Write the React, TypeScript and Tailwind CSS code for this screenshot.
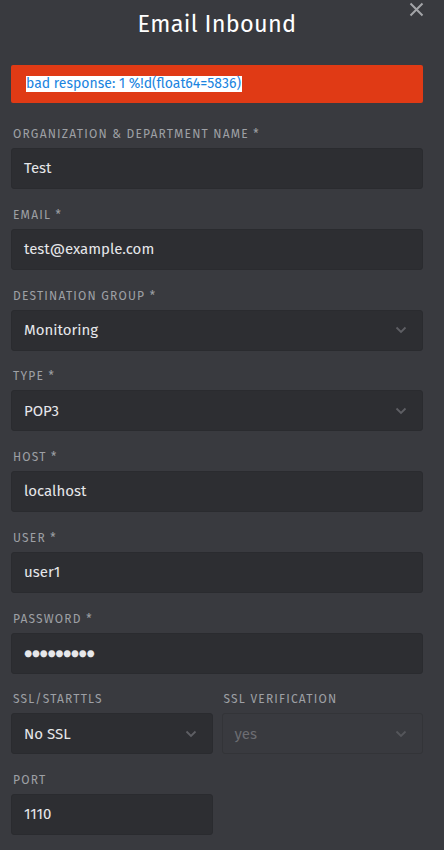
import { ReactNode } from "react"

const font = { fontFamily: "'Fira Sans', Lato, 'Noto Sans', sans-serif" }

function Chevron({ dim }: { dim?: boolean }) {
  return (
    <svg width="12" height="8" viewBox="0 0 12 8" className={dim ? "text-[#55565b]" : "text-[#5e5f64]"}>
      <path d="M1.5 1.5 L6 6 L10.5 1.5" fill="none" stroke="currentColor" strokeWidth="1.8" />
    </svg>
  )
}

function Field({ label, children }: { label: string; children: ReactNode }) {
  return (
    <div className="flex flex-col">
      <label className="h-4 text-[12px] leading-4 uppercase tracking-[0.1em] text-[#9ea0a5] pl-[2px]">{label}</label>
      <div className="mt-[6px]">{children}</div>
    </div>
  )
}

function Input({ value, select, disabled, password }: { value: string; select?: boolean; disabled?: boolean; password?: boolean }) {
  return (
    <div
      className={`h-[41px] rounded-[3px] border flex items-center justify-between pl-[12px] pr-[15px] ${
        disabled ? "bg-[#393a3f] border-[#333438]" : "bg-[#2d2e32] border-[#2a2b2f]"
      }`}
    >
      <span
        className={`${password ? "text-[14px] tracking-[-0.6px]" : "text-[15px]"} ${disabled ? "text-[#6c6d72]" : "text-[#e6e7ea]"}`}
      >
        {value}
      </span>
      {select && <Chevron dim={disabled} />}
    </div>
  )
}

export default function App() {
  return (
    <div className="min-h-[850px] w-[444px] bg-[#393a3f] relative pr-[10px]" style={font}>
      <button className="absolute right-[20px] top-[2px] text-[#a3a4a8]">
        <svg width="15" height="15" viewBox="0 0 15 15">
          <path d="M1.5 1.5 L13.5 13.5 M13.5 1.5 L1.5 13.5" stroke="currentColor" strokeWidth="2" />
        </svg>
      </button>
      <h1 className="text-center text-[23.5px] leading-[28px] pt-[10px] text-white tracking-[0.3px]">Email Inbound</h1>

      <div className="ml-[11px] mr-[11px] mt-[27px] h-[38px] rounded-[2px] bg-[#e03a15] flex items-center pl-[15px]">
        <span className="bg-white text-[#1a84e0] text-[14px] leading-[16px] pr-[1px]">bad response: 1 %!d(float64=5836)</span>
      </div>

      <div className="pl-[11px] pr-[11px] pt-[23px] flex flex-col gap-[17.75px]">
        <Field label="Organization & Department name *">
          <Input value="Test" />
        </Field>
        <Field label="Email *">
          <Input value="test@example.com" />
        </Field>
        <Field label="Destination group *">
          <Input value="Monitoring" select />
        </Field>
        <Field label="Type *">
          <Input value="POP3" select />
        </Field>
        <Field label="Host *">
          <Input value="localhost" />
        </Field>
        <Field label="User *">
          <Input value="user1" />
        </Field>
        <Field label="Password *">
          <Input value="●●●●●●●●●" password />
        </Field>
        <div className="grid grid-cols-2 gap-[9px]">
          <Field label="SSL/STARTTLS">
            <Input value="No SSL" select />
          </Field>
          <Field label="SSL verification">
            <Input value="yes" select disabled />
          </Field>
        </div>
        <div className="grid grid-cols-2 gap-[9px]">
          <Field label="Port">
            <Input value="1110" />
          </Field>
          <div />
        </div>
      </div>
    </div>
  )
}
